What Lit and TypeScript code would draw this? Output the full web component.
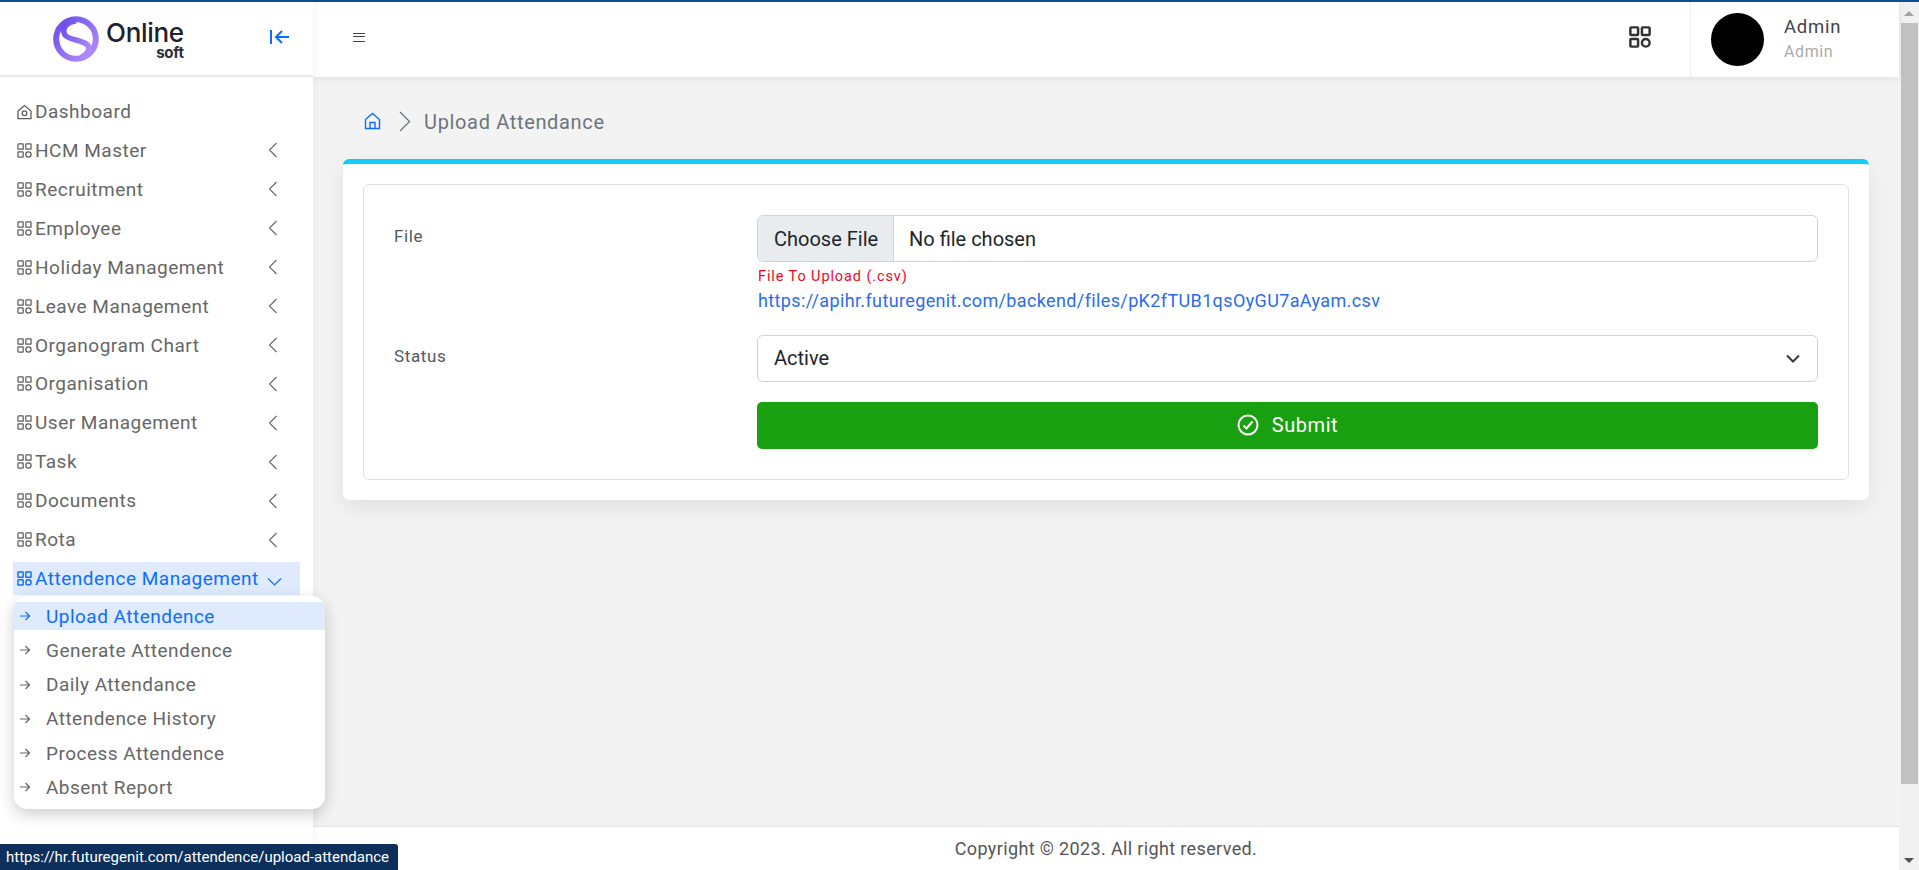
import { LitElement, html, css, svg } from "lit";
import { customElement } from "lit/decorators.js";

const apps = (size: number, sw: number) => svg`<svg width=${size} height=${size} viewBox="0 0 16 16" fill="none" stroke="currentColor" stroke-width=${sw}>
<rect x="1" y="1" width="5.6" height="5.6" rx=".6"/><rect x="9.4" y="1" width="5.6" height="5.6" rx=".6"/><rect x="1" y="9.4" width="5.6" height="5.6" rx=".6"/><circle cx="12.2" cy="12.2" r="2.8"/></svg>`;
const chevLeft = svg`<svg width="10" height="16" viewBox="0 0 10 16" fill="none" stroke="currentColor" stroke-width="1.1"><path d="M8.5 1 1.5 8l7 7"/></svg>`;
const chevDown = svg`<svg width="15" height="9" viewBox="0 0 15 9" fill="none" stroke="currentColor" stroke-width="1.1"><path d="M1 1.5 7.5 8 14 1.5"/></svg>`;
const arrow = svg`<svg width="12" height="12" viewBox="0 0 12 12" fill="none" stroke="currentColor" stroke-width="1.2"><path d="M1 6h9.5M6.5 2l4 4-4 4"/></svg>`;

const menu = ["HCM Master","Recruitment","Employee","Holiday Management","Leave Management","Organogram Chart","Organisation","User Management","Task","Documents","Rota"];
const sub = ["Upload Attendence","Generate Attendence","Daily Attendance","Attendence History","Process Attendence","Absent Report"];

@customElement("app-root")
export class AppRoot extends LitElement {
  static styles = css`
    :host { display:block; height:870px; overflow:hidden; position:relative; font-family:Roboto,"Liberation Sans",sans-serif; background:#f3f3f3; }
    * { box-sizing:border-box; }
    .topline { height:2px; background:#0d4f96; }
    .shell { display:flex; height:868px; }
    .side { width:313px; flex:none; background:#fff; position:relative; box-shadow:0 0 10px rgba(0,0,0,.06); z-index:2; }
    .brand { height:75px; border-bottom:2px solid #e9e9e9; display:flex; align-items:center; padding-left:53px; position:relative; }
    .brand-text { margin-left:7px; color:#20202e; display:flex; flex-direction:column; align-items:flex-end; margin-top:4px; }
    .online { font-size:26px; line-height:24px; font-weight:500; letter-spacing:-.3px; font-family:Inter,sans-serif; }
    .soft { font-size:15px; line-height:15px; font-weight:700; color:#2c2c3a; font-family:Inter,sans-serif; letter-spacing:-.2px; }
    .collapse { position:absolute; left:269px; top:26px; color:#0d6efd; display:flex; }
    nav { padding:18px 13px 0; }
    .row { height:33px; margin-bottom:5.93px; width:287px; display:flex; align-items:center; color:#666; font-size:19px; letter-spacing:.5px; padding-left:4px; }
    .row .ic { width:15px; height:15px; display:flex; flex:none; margin-right:3px; color:#5c5c5c; }
    .row .lbl { flex:1; white-space:nowrap; }
    .row .ch { width:10px; display:flex; margin-right:22px; color:#666; flex:none; }
    .row.active { background:#dfeafc; color:#0d6efd; width:287px; }
    .row.active .ic { color:#0d6efd; }
    .row.active .ch { color:#0d6efd; width:15px; margin-right:18px; margin-top:6px; }
    .fly { position:absolute; left:14px; top:596px; width:311px; height:213px; background:#fff; border-radius:13px; box-shadow:0 5px 16px rgba(0,0,0,.2); padding-top:6px; z-index:3; overflow:hidden; }
    .fly a { display:flex; align-items:center; height:28px; margin-bottom:6.3px; color:#666; font-size:19px; letter-spacing:.48px; padding-left:5px; white-space:nowrap; }
    .fly a svg { flex:none; margin-right:15px; }
    .fly a.on { background:#dfeafc; color:#0d6efd; }
    .main { flex:1; min-width:0; display:flex; flex-direction:column; position:relative; }
    .head { height:75px; flex:none; background:#fff; box-shadow:0 2px 8px rgba(0,0,0,.07); display:flex; align-items:center; padding-left:40px; color:#333; z-index:1; }
    .burger { width:12px; height:9px; border-top:1.5px solid #444; border-bottom:1.5px solid #444; position:relative; margin-top:-5px; }
    .burger i { position:absolute; left:0; right:0; top:2.25px; height:1.5px; background:#444; }
    .apps { margin-left:auto; margin-right:39px; margin-top:-6px; display:flex; color:#333; }
    .user { width:209px; height:75px; border-left:1px solid #efefef; display:flex; align-items:center; padding-left:20px; }
    .avatar { width:53px; height:53px; border-radius:50%; background:#000; flex:none; }
    .uname { margin-left:20px; margin-top:-1px; }
    .uname b { display:block; font-weight:400; font-size:18.5px; line-height:24px; letter-spacing:.75px; color:#444; }
    .uname span { display:block; font-size:16px; line-height:25px; letter-spacing:.6px; color:#aaa; }
    .content { flex:1; padding:0 30px; min-height:0; }
    .crumb { height:82px; padding-top:7px; display:flex; align-items:center; color:#6c757d; font-size:20px; letter-spacing:.66px; }
    .crumb .home { color:#0d6efd; display:flex; margin-left:21px; margin-top:-1px; }
    .crumb .sep { display:flex; margin:0 13px 0 17px; color:#6c757d; }
    .card { background:#fff; border-top:5px solid #11cdf5; border-radius:6px; box-shadow:0 8px 24px rgba(0,0,0,.08); padding:20px; height:341px; }
    .box { border:1px solid #dfe2e8; border-radius:6px; height:296px; padding:30px; display:grid; grid-template-columns:363px 1fr; align-content:start; }
    .label { color:#505a62; font-size:17px; letter-spacing:.65px; line-height:24px; padding-top:9px; }
    .file { height:47px; border:1px solid #ced4da; border-radius:6px; display:flex; align-items:center; font-size:20px; color:#212529; overflow:hidden; }
    .file .btn { height:100%; width:136px; flex:none; background:#e9ecef; border-right:1px solid #ced4da; display:flex; align-items:center; padding-left:16px; }
    .file .none { margin-left:15px; }
    .hint { color:#f5051f; font-size:14.5px; letter-spacing:.9px; line-height:20px; margin-top:5px; padding-left:1px; }
    .link { color:#2a6cf0; font-size:18px; line-height:24px; letter-spacing:.37px; margin-top:2px; margin-bottom:22px; text-decoration:none; display:block; padding-left:1px; }
    .select { height:47px; border:1px solid #ced4da; border-radius:6px; display:flex; align-items:center; justify-content:space-between; padding:0 17px 1px 16px; font-size:20px; color:#212529; }
    .select svg { color:#343a40; margin-top:1px; }
    .submit { height:47px; margin-top:20px; background:#18a010; border-radius:5px; display:flex; align-items:center; justify-content:center; color:#fff; font-size:20px; letter-spacing:.55px; gap:13px; padding-bottom:1px; }
    .foot { height:44px; flex:none; background:#fff; border-top:1px solid #e6e6e6; display:flex; align-items:center; justify-content:center; color:#555; font-size:18px; letter-spacing:.36px; }
    .bar { width:20px; flex:none; background:#f1f1f1; display:flex; flex-direction:column; align-items:center; position:relative; }
    .thumb { position:absolute; left:2px; width:17px; top:21px; height:761px; background:#c1c1c1; }
    .up,.down { position:absolute; left:5px; width:0; height:0; border-left:5px solid transparent; border-right:5px solid transparent; }
    .up { top:9px; border-bottom:5px solid #a3a3a3; }
    .down { bottom:7px; border-top:5px solid #505050; }
    .status { position:absolute; left:0; bottom:0; width:398px; height:26px; background:#0c2f5c; color:#fff; font-size:15px; line-height:26px; padding-left:6px; border-top-right-radius:3px; z-index:5; white-space:nowrap; }
  `;

  render() {
    return html`
      <div class="topline"></div>
      <div class="shell">
        <aside class="side">
          <div class="brand">
            <svg width="46" height="46" viewBox="0 0 46 46">
              <defs><linearGradient id="g" x1="0" y1="0" x2="1" y2="1"><stop offset="0" stop-color="#6a4de8"/><stop offset="1" stop-color="#b58fff"/></linearGradient></defs>
              <circle cx="23" cy="23" r="19.8" fill="#fff" stroke="url(#g)" stroke-width="6"/>
              <path d="M23 5C13 6 8.500 13 12 19C16 24.500 30 23.500 35 29.500C37.500 33.500 34 39 28 41" fill="none" stroke="url(#g)" stroke-width="5.500"/>
            </svg>
            <div class="brand-text"><span class="online">Online</span><span class="soft">soft</span></div>
            <span class="collapse"><svg width="21" height="18" viewBox="0 0 21 18" fill="none" stroke="currentColor" stroke-width="2"><path d="M2 2v14"/><path d="M20 9H7M13 3 7 9l6 6"/></svg></span>
          </div>
          <nav>
            <div class="row"><span class="ic"><svg width="15" height="16" viewBox="0 0 15 16" fill="none" stroke="currentColor" stroke-width="1.25"><path d="M1 7 7.500 1.500 14 7v7.500H1z"/><circle cx="7.500" cy="9.200" r="2.300"/></svg></span><span class="lbl">Dashboard</span></div>
            ${menu.map(m => html`<div class="row"><span class="ic">${apps(15,1.3)}</span><span class="lbl">${m}</span><span class="ch">${chevLeft}</span></div>`)}
            <div class="row active"><span class="ic">${apps(15,1.5)}</span><span class="lbl">Attendence Management</span><span class="ch">${chevDown}</span></div>
          </nav>
        </aside>
        <div class="main">
          <header class="head">
            <div class="burger"><i></i></div>
            <span class="apps">${apps(22,1.8)}</span>
            <div class="user"><div class="avatar"></div><div class="uname"><b>Admin</b><span>Admin</span></div></div>
          </header>
          <div class="content">
            <div class="crumb">
              <span class="home"><svg width="17" height="18" viewBox="0 0 17 18" fill="none" stroke="currentColor" stroke-width="1.4"><path d="M1.500 7.500 8.500 1.500l7 6V16.500h-14z"/><path d="M6 16.500v-6h5v6"/></svg></span>
              <span class="sep"><svg width="13" height="21" viewBox="0 0 13 21" fill="none" stroke="currentColor" stroke-width="1.3"><path d="M2 1l9.500 9.500L2 20"/></svg></span>
              <span>Upload Attendance</span>
            </div>
            <section class="card">
              <div class="box">
                <div class="label">File</div>
                <div>
                  <div class="file"><span class="btn">Choose File</span><span class="none">No file chosen</span></div>
                  <div class="hint">File To Upload (.csv)</div>
                  <a class="link">https://apihr.futuregenit.com/backend/files/pK2fTUB1qsOyGU7aAyam.csv</a>
                </div>
                <div class="label">Status</div>
                <div>
                  <div class="select"><span>Active</span><svg width="14" height="9" viewBox="0 0 14 9" fill="none" stroke="currentColor" stroke-width="2"><path d="M1 1.500 7 7.500l6-6"/></svg></div>
                  <div class="submit"><svg width="22" height="22" viewBox="0 0 22 22" fill="none" stroke="#fff" stroke-width="2"><circle cx="11" cy="11" r="9.500"/><path d="M6.500 11.500l3 3 6-7"/></svg><span>Submit</span></div>
                </div>
              </div>
            </section>
          </div>
          <footer class="foot">Copyright © 2023. All right reserved.</footer>
        </div>
        <div class="bar"><i class="up"></i><div class="thumb"></div><i class="down"></i></div>
      </div>
      <div class="fly">
        ${sub.map((s,i)=>html`<a class=${i===0?"on":""}>${arrow}<span>${s}</span></a>`)}
      </div>
      <div class="status">https://hr.futuregenit.com/attendence/upload-attendance</div>
    `;
  }
}
